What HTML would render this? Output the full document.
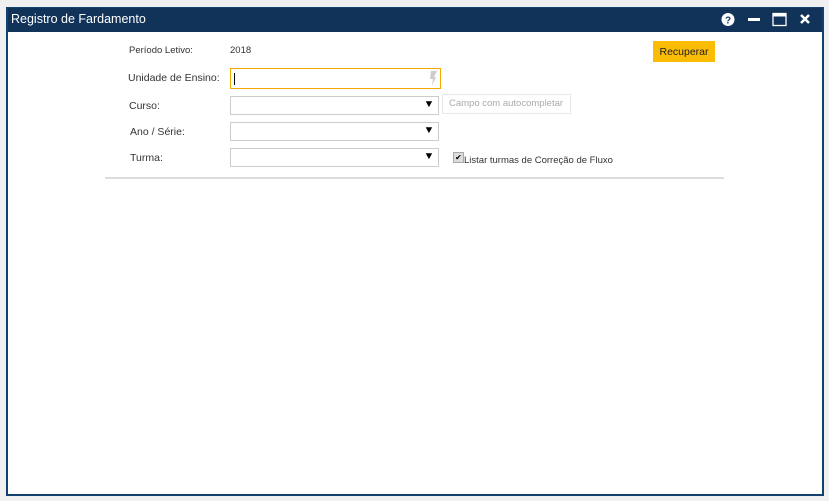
<!DOCTYPE html>
<html><head><style>
body{margin:0;width:829px;height:501px;background:#f0f0f0;font-family:"Liberation Sans",sans-serif;position:relative;overflow:hidden}
.win{position:absolute;left:6px;top:7px;width:814px;height:486px;border:1px solid #12416e;border-width:1px 2px 2px 2px;background:#fff}
.hd{position:absolute;left:0;top:0;right:0;height:24px;background:#11335a;color:#fff;font-size:12.5px;line-height:22px;padding-left:3px}
.t{position:absolute;font-size:10.5px;color:#333;white-space:nowrap}
.box{position:absolute;height:19px;border:1px solid #ccc;background:#fff;box-sizing:border-box}
.arr{position:absolute;right:4px;top:2px;font-size:10px;color:#000;transform:scaleX(1.1)}
</style></head><body>
<div class="win">
<div class="hd">Registro de Fardamento
<svg style="position:absolute;left:712px;top:4px" width="100" height="16">
<circle cx="8" cy="7.5" r="6.5" fill="#fff"/><text x="8" y="11.5" font-size="10" font-weight="bold" fill="#11335a" text-anchor="middle" font-family="Liberation Sans">?</text>
<rect x="28" y="6" width="12" height="3" fill="#fff"/>
<rect x="53" y="1.5" width="13" height="12" fill="none" stroke="#fff" stroke-width="1.3"/><rect x="53" y="1.5" width="13" height="3" fill="#fff"/>
<path d="M81 3 L89 11 M89 3 L81 11" stroke="#fff" stroke-width="2.5"/>
</svg></div>
</div>
<div class="t" style="left:129px;top:45px;font-size:9.5px">Período Letivo:</div>
<div class="t" style="left:230px;top:45px;font-size:9.5px">2018</div>
<div style="position:absolute;left:653px;top:41px;width:62px;height:21px;background:#fbbc05;font-size:10.5px;line-height:22px;text-align:center;color:#222">Recuperar</div>
<div class="t" style="left:128px;top:72px">Unidade de Ensino:</div>
<div class="box" style="left:230px;top:68px;width:211px;height:21px;border-color:#f5a800"><div style="position:absolute;left:3px;top:4px;width:1px;height:12px;background:#000"></div>
<svg style="position:absolute;right:3px;top:2px" width="9" height="15"><path d="M3 0 L9 0 L6 6 L8 6 L4 15 L5 8 L2 8 Z" fill="#ccc"/></svg></div>
<div class="t" style="left:129px;top:100px">Curso:</div>
<div class="box" style="left:230px;top:96px;width:209px"><span class="arr">▼</span></div>
<div style="position:absolute;left:442px;top:94px;width:129px;height:20px;border:1px solid #e8e8e8;box-sizing:border-box;font-size:9.5px;color:#aaa;line-height:18px;padding-left:6px;white-space:nowrap">Campo com autocompletar</div>
<div class="t" style="left:130px;top:126px">Ano / Série:</div>
<div class="box" style="left:230px;top:122px;width:209px"><span class="arr">▼</span></div>
<div class="t" style="left:130px;top:152px">Turma:</div>
<div class="box" style="left:230px;top:148px;width:209px"><span class="arr">▼</span></div>
<div style="position:absolute;left:453px;top:152px;width:9px;height:9px;background:#ddd;border:1px solid #aaa;font-size:8px;line-height:9px;text-align:center">✔</div>
<div class="t" style="left:464px;top:155px;font-size:9.5px">Listar turmas de Correção de Fluxo</div>
<div style="position:absolute;left:105px;top:177px;width:619px;height:2px;background:#ddd"></div>
</body></html>
